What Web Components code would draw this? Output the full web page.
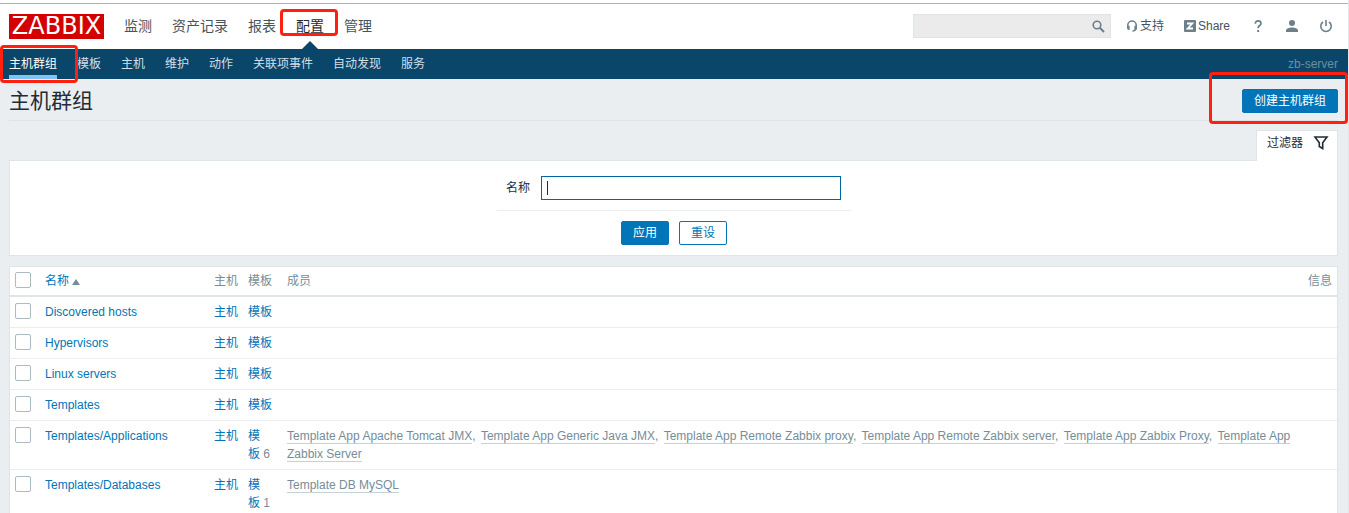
<!DOCTYPE html>
<html lang="zh-CN">
<head>
<meta charset="utf-8">
<title>主机群组</title>
<style>
html { background: #ebeef0; }
body {
    margin: 0;
    border-right: 1px solid #e4e7e9;
    background: #ebeef0;
    color: #1f2c33;
    font: 12px/18px "Liberation Sans", Arial, "Noto Sans CJK SC", sans-serif;
}
main {
    display: flex;
    flex-direction: column;
    padding: 0 10px 10px 9px;
}
zbx-filter { margin-top: 9px; }
zbx-group-table { margin-top: 10px; }
</style>
</head>
<body>
<zbx-header></zbx-header>
<zbx-subnav server="zb-server"></zbx-subnav>
<main>
    <zbx-title>主机群组
        <zbx-button slot="action" variant="marked">创建主机群组</zbx-button>
    </zbx-title>
    <zbx-filter></zbx-filter>
    <zbx-group-table></zbx-group-table>
</main>

<script>
const ICONS = {
    search: '<circle cx="5" cy="5" r="3.8" fill="none" stroke="currentColor" stroke-width="1.6"/><path d="M7.8 7.8L12 12" stroke="currentColor" stroke-width="2"/>',
    support: '<path d="M1.800 7V5.200a4.200 4.200 0 0 1 8.400 0v2.600c0 2-1.200 3-3.700 3.400" fill="none" stroke="currentColor" stroke-width="1.500"/><path d="M1 5.800h2.600v4.200H2.500Q1 9.600 1 8zM11 5.800H8.400v4.200h1.100Q11 9.600 11 8z" fill="currentColor"/>',
    share: '<rect width="12" height="12" rx="1" fill="currentColor"/><path d="M3 3.500h5.300L3.700 8.500h5.300" fill="none" stroke="#fff" stroke-width="1.800"/>',
    help: '<path d="M3.300 3.800C3.300 1.800 4.500.9 6.100.9s2.900.9 2.900 2.500C9 5.500 6.100 5.600 6.100 8.200" fill="none" stroke="currentColor" stroke-width="1.700"/><rect x="5.200" y="10" width="1.900" height="2" fill="currentColor"/>',
    user: '<circle cx="6" cy="3" r="3" fill="currentColor"/><path d="M0 12v-1.600C0 8.300 3 7.400 6 7.400s6 .9 6 3V12z" fill="currentColor"/>',
    power: '<path d="M3 2A5.200 5.200 0 1 0 9 2" fill="none" stroke="currentColor" stroke-width="1.600"/><path d="M6 0v6" stroke="currentColor" stroke-width="1.600"/>',
    funnel: '<path d="M1 1h12L8.700 6.800V12.500L5.300 10.500V6.800z" fill="none" stroke="currentColor" stroke-width="1.600"/>'
};

class ZbxIcon extends HTMLElement {
    constructor() {
        super();
        this.attachShadow({mode: "open"});
    }

    connectedCallback() {
        const name = this.getAttribute("name");
        const size = name === "funnel" ? 14 : 12;
        this.shadowRoot.innerHTML = `
        <style>
        :host { display: block; flex: none; }
        svg { display: block; overflow: visible; }
        </style>
        <svg width="${size}" height="${size}" viewBox="0 0 ${size} ${size}" aria-hidden="true">${ICONS[name]}</svg>
        `;
    }
}

// red outline drawn around whatever is slotted in
class ZbxMark extends HTMLElement {
    constructor() {
        super();
        this.attachShadow({mode: "open"}).innerHTML = `
        <style>
        :host { display: block; position: relative; }
        .frame {
            position: absolute;
            inset: var(--mark-inset, 0);
            border: 3px solid #ff2010;
            border-radius: 4px;
            pointer-events: none;
            z-index: 5;
        }
        </style>
        <slot></slot>
        <div class="frame"></div>
        `;
    }
}

class ZbxHeader extends HTMLElement {
    constructor() {
        super();
        this.attachShadow({mode: "open"}).innerHTML = `
        <style>
        :host {
            display: block;
            padding: 3px 0 1px;
            background: #fff;
        }
        header {
            display: flex;
            align-items: center;
            height: 44px;
            padding: 0 16px 0 9px;
            border-top: 1px solid #b0b0b0;
        }
        a { color: #46545c; text-decoration: none; }
        .logo {
            width: 95px;
            background: #d40000;
            color: #fff;
            font: 24px/25px "DejaVu Sans", sans-serif;
            text-align: center;
        }
        nav {
            display: flex;
            gap: 20px;
            flex: 1;
            margin-left: 20px;
            font-size: 14px;
            line-height: 44px;
        }
        nav a { display: block; }
        nav .selected { position: relative; color: #1f2c33; }
        .selected::after {
            content: "";
            position: absolute;
            left: 6px;
            bottom: -1px;
            border: 8px solid transparent;
            border-top: 0;
            border-bottom-color: #0a466a;
        }
        zbx-mark { --mark-inset: 5px -14px 12px -16px; }
        form {
            display: flex;
            align-items: center;
            box-sizing: border-box;
            width: 198px;
            height: 24px;
            padding-right: 6px;
            border: 1px solid #dfe4e7;
            background: #ebebeb;
        }
        input {
            flex: 1;
            min-width: 0;
            padding: 0 5px;
            border: 0;
            outline: 0;
            background: none;
            font: inherit;
        }
        button {
            padding: 0;
            border: 0;
            background: none;
            color: #6c808c;
        }
        .tools {
            display: flex;
            align-items: center;
            gap: 20px;
            margin-left: 15px;
        }
        .tools a { display: flex; align-items: center; gap: 2px; }
        .tools .icon-only { padding-left: 2px; }
        .tools zbx-icon { color: #6c808c; }
        </style>
        <header>
            <a class="logo" href="#">ZABBIX</a>
            <nav>
                <a href="#">监测</a>
                <a href="#">资产记录</a>
                <a href="#">报表</a>
                <zbx-mark><a class="selected" href="#">配置</a></zbx-mark>
                <a href="#">管理</a>
            </nav>
            <form>
                <input type="text" aria-label="搜索">
                <button type="button" aria-label="搜索"><zbx-icon name="search"></zbx-icon></button>
            </form>
            <div class="tools">
                <a href="#"><zbx-icon name="support"></zbx-icon>支持</a>
                <a href="#"><zbx-icon name="share"></zbx-icon>Share</a>
                <a class="icon-only" href="#" aria-label="帮助"><zbx-icon name="help"></zbx-icon></a>
                <a class="icon-only" href="#" aria-label="用户"><zbx-icon name="user"></zbx-icon></a>
                <a class="icon-only" href="#" aria-label="退出"><zbx-icon name="power"></zbx-icon></a>
            </div>
        </header>
        `;
    }
}

class ZbxSubnav extends HTMLElement {
    constructor() {
        super();
        this.attachShadow({mode: "open"});
    }

    connectedCallback() {
        this.shadowRoot.innerHTML = `
        <style>
        :host {
            display: flex;
            justify-content: space-between;
            padding: 0 10px 0 9px;
            background: #0a466a;
            line-height: 30px;
        }
        nav { display: flex; gap: 20px; }
        a {
            display: block;
            color: #d3dfe6;
            text-decoration: none;
        }
        .selected {
            color: #fff;
            box-shadow: inset 0 -4px #7dc4f4;
        }
        zbx-mark { --mark-inset: -4px -21px -4px -9px; }
        .server { color: #6b8fa3; }
        </style>
        <nav>
            <zbx-mark><a class="selected" href="#">主机群组</a></zbx-mark>
            <a href="#">模板</a>
            <a href="#">主机</a>
            <a href="#">维护</a>
            <a href="#">动作</a>
            <a href="#">关联项事件</a>
            <a href="#">自动发现</a>
            <a href="#">服务</a>
        </nav>
        <div class="server">${this.getAttribute("server")}</div>
        `;
    }
}

class ZbxButton extends HTMLElement {
    constructor() {
        super();
        this.attachShadow({mode: "open"});
    }

    connectedCallback() {
        const button = `<button type="button"><slot></slot></button>`;
        const marked = this.getAttribute("variant") === "marked";
        this.shadowRoot.innerHTML = `
        <style>
        :host { display: block; }
        button {
            display: block;
            height: 24px;
            padding: 0 11px;
            border: 1px solid #0275b8;
            border-radius: 2px;
            background: #0275b8;
            color: #fff;
            font: inherit;
            line-height: 22px;
        }
        :host([variant="alt"]) button { background: #fff; color: #0275b8; }
        zbx-mark { --mark-inset: -17px -10px -11px -33px; }
        </style>
        ${marked ? `<zbx-mark>${button}</zbx-mark>` : button}
        `;
    }
}

class ZbxTitle extends HTMLElement {
    constructor() {
        super();
        this.attachShadow({mode: "open"}).innerHTML = `
        <style>
        :host {
            display: flex;
            align-items: center;
            justify-content: space-between;
            padding: 10px 0 7px;
            border-bottom: 1px solid #dfe4e7;
        }
        h1 {
            margin: 0;
            font-size: 21px;
            font-weight: normal;
            line-height: 24px;
        }
        </style>
        <h1><slot></slot></h1>
        <slot name="action"></slot>
        `;
    }
}

class ZbxFilter extends HTMLElement {
    constructor() {
        super();
        this.attachShadow({mode: "open"}).innerHTML = `
        <style>
        :host { display: flex; flex-direction: column; }
        .tab {
            display: flex;
            align-items: center;
            align-self: flex-end;
            gap: 11px;
            height: 31px;
            margin-bottom: -1px;
            padding: 0 9px 6px 10px;
            box-sizing: border-box;
            border: 1px solid #dfe4e7;
            border-bottom: 0;
            background: #fff;
            color: #1f2c33;
            font: inherit;
            z-index: 1;
        }
        form {
            display: flex;
            flex-direction: column;
            align-items: center;
            padding: 15px 0 10px 1px;
            border: 1px solid #dfe4e7;
            background: #fff;
        }
        .field {
            display: flex;
            align-items: center;
            gap: 11px;
            padding: 0 10px 10px 9px;
            border-bottom: 1px solid #ebeef0;
        }
        input {
            box-sizing: border-box;
            width: 300px;
            height: 24px;
            padding: 0 5px;
            border: 1px solid #00689e;
            outline: 0;
            background: linear-gradient(#1f2c33, #1f2c33) 5px 4px / 1px 14px no-repeat #fff;
            font: inherit;
        }
        .buttons { display: flex; gap: 10px; padding-top: 10px; }
        </style>
        <button class="tab" type="button">过滤器<zbx-icon name="funnel"></zbx-icon></button>
        <form>
            <div class="field">
                <label for="name">名称</label>
                <input id="name" type="text">
            </div>
            <div class="buttons">
                <zbx-button>应用</zbx-button>
                <zbx-button variant="alt">重设</zbx-button>
            </div>
        </form>
        `;
    }
}

class ZbxGroupTable extends HTMLElement {
    constructor() {
        super();
        this.attachShadow({mode: "open"});
    }

    set groups(groups) {
        this._groups = groups;
        this.render();
    }

    renderRow(group) {
        const members = group.members || [];
        const count = members.length ? `&nbsp;${members.length}` : "";
        return `
        <tr>
            <td><input type="checkbox" aria-label="${group.name}"></td>
            <td><a href="#">${group.name}</a></td>
            <td><a href="#">主机</a></td>
            <td><a href="#">模板</a>${count}</td>
            <td>${members.map(m => `<a class="member" href="#">${m}</a>`).join(", ")}</td>
            <td></td>
        </tr>`;
    }

    render() {
        this.shadowRoot.innerHTML = `
        <style>
        :host {
            display: block;
            border: 1px solid #dfe4e7;
            background: #fff;
        }
        table {
            width: 100%;
            table-layout: fixed;
            border-collapse: separate;
            border-spacing: 0;
            color: #768d99;
        }
        th, td {
            padding: 6px 5px;
            border-bottom: 1px solid #ebeef0;
            text-align: left;
            vertical-align: top;
        }
        th {
            padding: 5px;
            border-bottom: 2px solid #dfe4e7;
            font-weight: normal;
        }
        .check { width: 20px; }
        .name { width: 159px; }
        .hosts { width: 24px; }
        .templates { width: 29px; }
        .info { width: 24px; text-align: right; }
        a { color: #0275b8; text-decoration: none; }
        .member { color: #768d99; border-bottom: 1px solid #c8d1d6; }
        .member + .member { margin-left: 2px; }
        .arrow {
            display: inline-block;
            margin-left: 3px;
            border: 4px solid transparent;
            border-top: 0;
            border-bottom: 6px solid #768d99;
        }
        input {
            display: block;
            appearance: none;
            width: 16px;
            height: 16px;
            margin: 0;
            border: 1px solid #acbbc2;
            border-radius: 2px;
            background: #fff;
        }
        </style>
        <table>
            <thead>
                <tr>
                    <th class="check"><input type="checkbox" aria-label="全选"></th>
                    <th class="name"><a href="#">名称<span class="arrow"></span></a></th>
                    <th class="hosts">主机</th>
                    <th class="templates">模板</th>
                    <th>成员</th>
                    <th class="info">信息</th>
                </tr>
            </thead>
            <tbody>${this._groups.map(g => this.renderRow(g)).join("")}</tbody>
        </table>
        `;
    }
}

customElements.define("zbx-icon", ZbxIcon);
customElements.define("zbx-mark", ZbxMark);
customElements.define("zbx-button", ZbxButton);
customElements.define("zbx-header", ZbxHeader);
customElements.define("zbx-subnav", ZbxSubnav);
customElements.define("zbx-title", ZbxTitle);
customElements.define("zbx-filter", ZbxFilter);
customElements.define("zbx-group-table", ZbxGroupTable);

document.querySelector("zbx-group-table").groups = [
    {name: "Discovered hosts"},
    {name: "Hypervisors"},
    {name: "Linux servers"},
    {name: "Templates"},
    {
        name: "Templates/Applications",
        members: [
            "Template App Apache Tomcat JMX",
            "Template App Generic Java JMX",
            "Template App Remote Zabbix proxy",
            "Template App Remote Zabbix server",
            "Template App Zabbix Proxy",
            "Template App Zabbix Server"
        ]
    },
    {name: "Templates/Databases", members: ["Template DB MySQL"]}
];
</script>
</body>
</html>
